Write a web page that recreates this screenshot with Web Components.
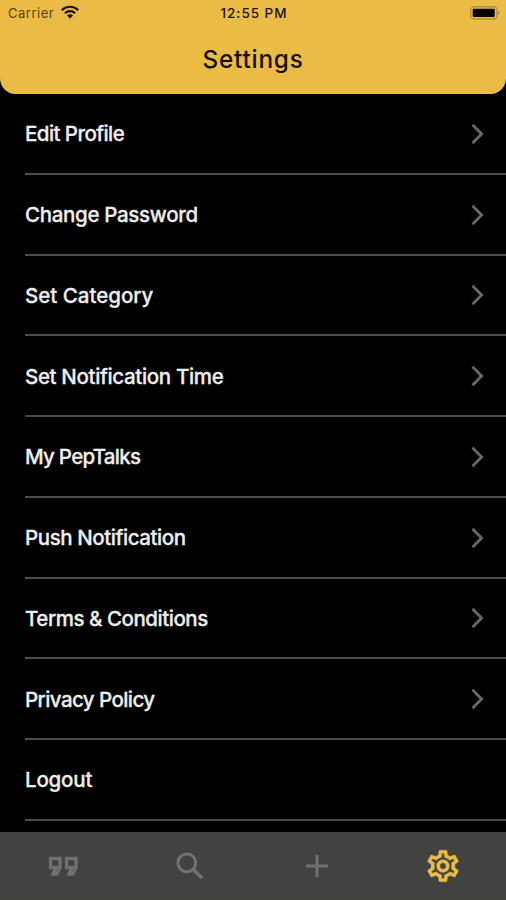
<!DOCTYPE html>
<html lang="en">
<head>
<meta charset="utf-8">
<title>Settings</title>
<style>
html, body { margin: 0; height: 100%; background: #000; }
</style>
</head>
<body>
<settings-screen></settings-screen>
<script>
const define = (name, html) => customElements.define(name, class extends HTMLElement {
  constructor() {
    super();
    this.attachShadow({ mode: 'open' }).innerHTML = html;
  }
});

define('status-bar', `
<style>
:host { display: grid; grid-template-columns: 1fr auto 1fr; align-items: center; height: 26px; padding: 0 6px 0 8px; box-sizing: border-box; font-size: 13px; line-height: 26px; }
.left { display: flex; align-items: center; gap: 7px; color: #54430f; letter-spacing: .5px; }
.time { color: #1b1503; font-weight: 500; letter-spacing: .95px; font-size: 13.500px; }
.right { display: flex; justify-content: flex-end; }
svg { display: block; }
</style>
<div class="left"><span>Carrier</span>
<svg width="18" height="14" viewBox="0 0 18 14" style="margin-top:-2px"><g fill="none" stroke="#17120a" stroke-width="2.2"><path d="M.8 5.2C5.4.6 12.6.6 17.2 5.2"/><path d="M3.9 8.2c2.9-2.8 7.3-2.8 10.2 0"/></g><path d="M6 10.5c1.7-1.6 4.3-1.6 6 0L9 13.500z" fill="#17120a"/></svg></div>
<span class="time">12:55 PM</span>
<div class="right"><svg width="30" height="14" viewBox="0 0 30 14"><rect x=".7" y=".7" width="26" height="12.300" rx="3.200" fill="none" stroke="#b09240" stroke-width="1.400"/><rect x="2.700" y="2.700" width="22" height="8.300" rx="1" fill="#080600"/><path d="M28 5v4q1.500-.6 1.500-2T28 5z" fill="#a78a38"/></svg></div>`);

define('title-bar', `
<style>
:host { display: block; height: 93.500px; background: #eabc45; border-radius: 0 0 15px 15px / 0 0 16px 16px; }
h1 { margin: 0; font-size: 24.300px; font-weight: 500; line-height: 66px; letter-spacing: .8px; text-align: center; color: #151004; }
</style>
<slot name="status"></slot><h1><slot></slot></h1>`);

customElements.define('settings-row', class extends HTMLElement {
  constructor() {
    super();
    this.attachShadow({ mode: 'open' }).innerHTML = `
<style>
:host { display: flex; align-items: center; justify-content: space-between; height: 80.750px; box-sizing: border-box; margin-left: 25px; padding: 1px 21px 0 0; border-bottom: 2px solid #4c4c4c; color: #eee; font-size: 20.500px; font-weight: 500; }
span { letter-spacing: var(--track, 0); -webkit-text-stroke: .3px currentColor; }
svg { display: block; }
</style>
<span><slot></slot></span>
${this.hasAttribute('plain') ? '' : '<svg width="15" height="22" viewBox="0 0 15 22"><path d="M2.500 1.800 11.600 11l-9.100 9.200" fill="none" stroke="#686868" stroke-width="2.800"/></svg>'}`;
  }
});

define('tab-bar', `
<style>
:host { display: grid; grid-template-columns: repeat(4, 1fr); place-items: center; height: 68px; background: #424242; color: #707070; box-sizing: border-box; border-bottom: 1px solid #494042; }
svg { display: block; }
.on { color: #eabc45; }
</style>
<svg width="30" height="20" viewBox="0 0 30 20"><g fill="none" stroke="currentColor" stroke-width="3.400"><path d="M2.500 2.500h9.500v9L9 18H5l3-6.500H2.500z"/><path d="M18.500 2.500h9.500v9L25 18h-4l3-6.500h-5.500z"/></g></svg>
<svg width="28" height="28" viewBox="0 0 28 28"><g fill="none" stroke="currentColor" stroke-width="3"><circle cx="10.800" cy="10.800" r="8.900"/><path d="m17.200 17.200 9 9" stroke-width="3.500"/></g></svg>
<svg width="22" height="22" viewBox="0 0 22 22" style="margin-left:1px"><path d="M11 0v22M0 11h22" stroke="currentColor" stroke-width="3"/></svg>
<svg class="on" width="38" height="38" viewBox="0 0 24 24"><path fill="currentColor" stroke="currentColor" stroke-width=".25" d="M19.430 12.980c.04-.32.07-.64.07-.98s-.03-.66-.07-.98l2.110-1.650c.19-.15.24-.42.12-.64l-2-3.460c-.09-.16-.26-.25-.44-.25-.06 0-.12.010-.17.030l-2.490 1c-.52-.4-1.080-.73-1.690-.98l-.38-2.650C14.460 2.180 14.250 2 14 2h-4c-.25 0-.46.18-.49.42l-.38 2.650c-.61.25-1.170.59-1.690.98l-2.490-1c-.06-.02-.12-.03-.18-.03-.17 0-.34.09-.43.25l-2 3.460c-.13.22-.07.49.12.64l2.110 1.650c-.04.32-.07.65-.07.98s.03.66.07.98l-2.110 1.650c-.19.15-.24.42-.12.64l2 3.460c.09.16.26.25.44.25.06 0 .12-.01.17-.03l2.490-1c.52.4 1.080.73 1.690.98l.38 2.650c.03.24.24.42.49.42h4c.25 0 .46-.18.49-.42l.38-2.650c.61-.25 1.170-.59 1.690-.98l2.490 1c.06.02.12.03.18.03.17 0 .34-.09.43-.25l2-3.460c.12-.22.07-.49-.12-.64zm-1.980-1.710c.04.31.05.52.05.73s-.02.43-.05.73l-.14 1.130.89.7 1.080.84-.7 1.210-1.270-.51-1.040-.42-.9.68c-.43.32-.84.56-1.250.73l-1.060.43-.16 1.130-.2 1.350h-1.400l-.19-1.350-.16-1.130-1.060-.43c-.43-.18-.83-.41-1.230-.71l-.91-.7-1.060.43-1.270.51-.7-1.210 1.080-.84.89-.7-.14-1.130c-.03-.31-.05-.54-.05-.74s.02-.43.05-.73l.14-1.130-.89-.7-1.080-.84.7-1.210 1.270.51 1.040.42.9-.68c.43-.32.84-.56 1.250-.73l1.060-.43.16-1.130.2-1.350h1.390l.19 1.350.16 1.130 1.060.43c.43.18.83.41 1.230.71l.91.7 1.060-.43 1.270-.51.7 1.210-1.070.85-.89.7zM12 8c-2.210 0-4 1.790-4 4s1.790 4 4 4 4-1.790 4-4-1.790-4-4-4m0 6c-1.100 0-2-.9-2-2s.9-2 2-2 2 .9 2 2-.9 2-2 2"/></svg>`);

define('settings-screen', `
<style>
:host { display: flex; flex-direction: column; height: 900px; background: #000; font-family: Inter, "Liberation Sans", sans-serif; }
main { flex: 1; min-height: 0; overflow: hidden; padding-top: .5px; }
</style>
<title-bar><status-bar slot="status"></status-bar>Settings</title-bar>
<main>
<settings-row style="--track:-.56px">Edit Profile</settings-row>
<settings-row style="--track:-.32px">Change Password</settings-row>
<settings-row>Set Category</settings-row>
<settings-row style="--track:-.34px">Set Notification Time</settings-row>
<settings-row style="--track:-.75px">My PepTalks</settings-row>
<settings-row style="--track:-.42px">Push Notification</settings-row>
<settings-row style="--track:-.46px">Terms &amp; Conditions</settings-row>
<settings-row style="--track:-.57px">Privacy Policy</settings-row>
<settings-row plain style="--track:-.2px">Logout</settings-row>
</main>
<tab-bar></tab-bar>`);
</script>
</body>
</html>
